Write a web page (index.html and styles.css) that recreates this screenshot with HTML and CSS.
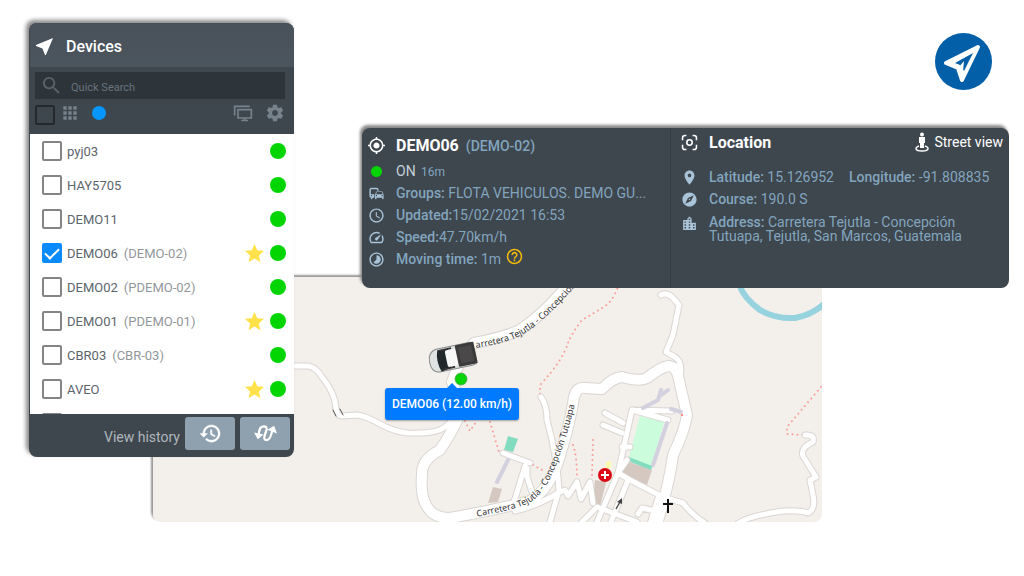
FILE: index.html
```html
<!DOCTYPE html>
<html lang="en">

<head>
	<meta charset="UTF-8">
	<meta name="viewport" content="width=device-width, initial-scale=1.0">
	<title>Devices</title>
	<link rel="stylesheet" href="styles.css">
</head>

<body>
	<svg class="sprite" aria-hidden="true">
		<symbol id="star" viewBox="0 0 24 24">
			<path d="M12 17.27L18.18 21l-1.64-7.03L22 9.24l-7.19-.61L12 2 9.19 8.63 2 9.24l5.46 4.73L5.82 21z" />
		</symbol>
	</svg>

	<main class="scene">
		<!-- map -->
		<section class="map">
			<svg class="map-canvas" viewBox="153 277 669 245" preserveAspectRatio="xMinYMin slice">
				<defs>
					<path id="label-north" d="M476 348 C500 344 518 340 536 325 C552 312 562 301 580 281" />
					<path id="label-south" d="M477 517 C500 511 518 510 532 501 C548 490 556 466 562 449 C569 430 573 410 580 386" />
					<g id="roads">
						<path d="M290 366 L308 366 Q316 367 322 377 Q335 393 336 408 Q337 416 342 416 L357 415 Q366 416 380 424 Q395 432 408 433 Q436 434 445 427 Q456 418 460 408" />
						<path d="M661 295 Q666 292 672 297 L679 305 L673 335 L666 352 L675 357 Q683 362 680 378" />
						<path d="M541 397 Q547 405 547 420 L552 440 Q558 470 559 490 L550 522" />
						<path d="M503 453 L530 463 M525 466 L514 502 M527 468 L527 477 L532 492" />
						<path d="M515 511 Q535 507 560 492 L565 490 L568 496 L577 482 L581 499 L590 482 L593 503" />
						<path d="M605 413 L623 423 M603 425 L622 433 M622 447 L630 447 M632 410 L672 411 M632 410 L668 420" />
						<path d="M632 410 L618 473 L597 522" />
						<path d="M627 460 L618 473 L630 480 L663 497 L683 503 Q692 515 706 524" />
						<path d="M628 480 L611 522 M580 524 L597 507 L637 522 M638 514 L642 508 L655 511 M658 498 L650 524" />
						<path d="M737 524 Q748 516 783 511 Q800 510 808 513 Q816 509 813 495 L810 480 L816 477 L803 456 Q800 448 813 442 Q815 434 805 435" />
					</g>
					<g id="main-road">
						<path d="M577 277 L560 294 Q542 315 520 330 Q505 337 474 343 Q462 353 452 382 L462 405 Q460 420 440 450 Q421 460 422 475 Q420 498 428 508 Q434 518 450 518 Q490 511 530 501 Q548 490 557 465 Q570 425 574 397 Q577 386 585 388 L602 389 Q612 378 622 377 Q640 382 647 378 Q661 367 668 366 Q676 366 678 376 L687 415 Q685 430 673 455 Q669 485 657 524" />
					</g>
				</defs>
				<rect class="land" x="153" y="277" width="669" height="245" />
				<path class="river" d="M740 286 Q743 297 760 310 Q775 319 795 318 Q812 315 824 304" />

				<path class="trail" d="M619 284 Q614 300 604 307 L582 320 Q572 333 568 343 Q563 360 540 385 L540 397" />
				<path class="trail" d="M821 387 L787 427 L787 434 L803 435" />
				<path class="trail" d="M573 445 Q577 455 577 478 M593 440 L592 475 M490 422 L499 452 M533 465 L542 470 M465 421 L470 431 L476 422" />

				<path class="building" d="M493 487L502 489L498 502L488 503z M595 480L606 482L600 507L593 502z M627 461L652 470L647 485L621 474z" />
				<path class="court" d="M508 436L518 439L513 452L504 450z M629 456L653 465L651 470L628 461z" />
				<path class="field" d="M640 416L664 422L652 466L629 457z" />
				<path class="yellow-patch" d="M606 462L611 461L611 468L605 469z" />

				<use class="casing" href="#roads" />
				<use class="casing wide" href="#main-road" />
				<use class="fill" href="#roads" />
				<use class="fill wide" href="#main-road" />

				<path class="walk" d="M508 460L497 482 M667 423L653 465 M643 408L658 400L661 390 M660 396L668 390 M671 409L681 412" />
				<path class="bridge" d="M333 410l3 6 M340 409l3 6" />
				<circle cx="682" cy="415" r="1" fill="#f66" />

				<text class="road-label"><textPath href="#label-north">arretera Tejutla - Concepción</textPath></text>
				<text class="road-label"><textPath href="#label-south">Carretera Tejutla - Concepción Tutuapa</textPath></text>

				<circle cx="605" cy="475" r="7" fill="#dc0a14" />
				<path d="M601 475h8M605 471v8" stroke="#fff" stroke-width="2" />
				<path d="M616 509l4-7" fill="none" stroke="#444" stroke-width="1.4" />
				<path d="M617 502l5-4v6z" fill="#444" />
				<path d="M668 499v14M663 504h10" stroke="#111" stroke-width="2" />

				<g transform="rotate(-12 453 357)">
					<rect x="429" y="346" width="47" height="23" rx="8" fill="#8b8d8c" opacity=".5" />
					<path d="M437 346h33q5 0 5 2v19q0 2-5 2h-33q-8-1-8-11t8-12z" fill="#dfe3e2" stroke="#8a8d8d" />
					<path d="M439 347l10 2v18l-10 2q-4-11 0-22z" fill="#20282b" />
					<path d="M439 347h14v2h-10zM439 368h14v-2h-10z" fill="#333" />
					<rect x="446" y="349" width="11" height="17" rx="2" fill="#f7f7f7" />
					<rect x="457" y="346" width="19" height="22" rx="1" fill="#3c3b3b" />
					<path d="M460 349h13v16h-13z" fill="#4a4848" />
				</g>
				<circle cx="461" cy="379" r="6" fill="#08d408" stroke="#4a9a4a" stroke-width=".7" />
			</svg>
			<div class="tooltip">DEMO06 (12.00 km/h)</div>
		</section>

		<!-- devices list -->
		<aside class="devices">
			<header class="devices-header">
				<svg class="icon" viewBox="2 2 20 20"><path d="M21 3L3 10.53v.98l6.84 2.65L12.48 21h.98L21 3z" /></svg>
				<h1>Devices</h1>
			</header>
			<div class="search">
				<svg class="icon" viewBox="0 0 24 24"><path d="M15.5 14h-.79l-.28-.27C15.41 12.59 16 11.11 16 9.5 16 5.91 13.09 3 9.5 3S3 5.91 3 9.5 5.91 16 9.5 16c1.61 0 3.09-.59 4.23-1.57l.27.28v.79l5 4.99L20.49 19l-4.99-5zm-6 0C7.01 14 5 11.99 5 9.5S7.01 5 9.5 5 14 7.01 14 9.5 11.99 14 9.5 14z" /></svg>
				<input type="text" placeholder="Quick Search" aria-label="Quick Search">
			</div>
			<div class="toolbar">
				<input class="check dark" type="checkbox" aria-label="Select all">
				<button class="tool" aria-label="Groups">
					<svg viewBox="0 0 24 24"><path d="M4 8h4V4H4v4zm6 12h4v-4h-4v4zm-6 0h4v-4H4v4zm0-6h4v-4H4v4zm6 0h4v-4h-4v4zm6-10v4h4V4h-4zm-6 4h4V4h-4v4zm6 6h4v-4h-4v4zm0 6h4v-4h-4v4z" /></svg>
				</button>
				<button class="tool" aria-label="Status"><span class="blue-dot"></span></button>
				<button class="tool push" aria-label="Screens">
					<svg viewBox="0 0 24 24"><path d="M2 15V4h18M6 8h16v10H6zM10 21h8M14 18v3" fill="none" stroke="currentColor" stroke-width="2" /></svg>
				</button>
				<button class="tool" aria-label="Settings">
					<svg viewBox="0 0 24 24"><path d="M19.43 12.98c.04-.32.07-.64.07-.98s-.03-.66-.07-.98l2.11-1.65c.19-.15.24-.42.12-.64l-2-3.46c-.12-.22-.39-.3-.61-.22l-2.49 1c-.52-.4-1.08-.73-1.69-.98l-.38-2.65C14.46 2.18 14.25 2 14 2h-4c-.25 0-.46.18-.49.42l-.38 2.65c-.61.25-1.17.59-1.69.98l-2.49-1c-.23-.09-.49 0-.61.22l-2 3.46c-.13.22-.07.49.12.64l2.11 1.65c-.04.32-.07.65-.07.98s.03.66.07.98l-2.11 1.65c-.19.15-.24.42-.12.64l2 3.46c.12.22.39.3.61.22l2.49-1c.52.4 1.08.73 1.69.98l.38 2.65c.03.24.24.42.49.42h4c.25 0 .46-.18.49-.42l.38-2.65c.61-.25 1.17-.59 1.69-.98l2.49 1c.23.09.49 0 .61-.22l2-3.46c.12-.22.07-.49-.12-.64l-2.11-1.65zM12 15.5c-1.93 0-3.5-1.57-3.5-3.5s1.57-3.5 3.5-3.5 3.5 1.57 3.5 3.5-1.57 3.5-3.5 3.5z" /></svg>
				</button>
			</div>
			<ul class="device-list">
				<li><label><input class="check" type="checkbox">pyj03</label><span class="dot"></span></li>
				<li><label><input class="check" type="checkbox">HAY5705</label><span class="dot"></span></li>
				<li><label><input class="check" type="checkbox">DEMO11</label><span class="dot"></span></li>
				<li><label><input class="check" type="checkbox" checked>DEMO06 <small>(DEMO-02)</small></label><svg class="star"><use href="#star" /></svg><span class="dot"></span></li>
				<li><label><input class="check" type="checkbox">DEMO02 <small>(PDEMO-02)</small></label><span class="dot"></span></li>
				<li><label><input class="check" type="checkbox">DEMO01 <small>(PDEMO-01)</small></label><svg class="star"><use href="#star" /></svg><span class="dot"></span></li>
				<li><label><input class="check" type="checkbox">CBR03 <small>(CBR-03)</small></label><span class="dot"></span></li>
				<li><label><input class="check" type="checkbox">AVEO</label><svg class="star"><use href="#star" /></svg><span class="dot"></span></li>
				<li><input class="check" type="checkbox" aria-label="Device"></li>
			</ul>
			<footer class="devices-footer">
				<span>View history</span>
				<button class="history-button" aria-label="History">
					<svg viewBox="0 0 24 24"><path d="M13 3c-4.97 0-9 4.03-9 9H1l3.89 3.89.07.14L9 12H6c0-3.87 3.13-7 7-7s7 3.13 7 7-3.13 7-7 7c-1.93 0-3.68-.79-4.94-2.06l-1.42 1.42C8.27 19.99 10.51 21 13 21c4.97 0 9-4.03 9-9s-4.03-9-9-9zm-1 5v5l4.28 2.54.72-1.21-3.5-2.08V8H12z" stroke="currentColor" stroke-width=".4" /></svg>
				</button>
				<button class="history-button" aria-label="Route">
					<svg viewBox="0 0 24 24"><path d="M5 14C5 8 7 4.500 10 4.500q4 0 3 4l-2 6q-1 4.500 2 4.500 4 0 6-10" fill="none" stroke="currentColor" stroke-width="2.400" /><path d="M0 11l4 7 6-5zM14 8l7-4 3 8z" /></svg>
				</button>
			</footer>
		</aside>

		<!-- selected device -->
		<section class="details">
			<div class="vehicle">
				<div class="row title">
					<svg class="icon" viewBox="1 1 22 22"><path d="M12 8c-2.21 0-4 1.79-4 4s1.79 4 4 4 4-1.79 4-4-1.79-4-4-4zm8.94 3c-.46-4.17-3.77-7.48-7.94-7.94V1h-2v2.06C6.83 3.52 3.52 6.83 3.06 11H1v2h2.06c.46 4.17 3.77 7.48 7.94 7.94V23h2v-2.06c4.17-.46 7.48-3.77 7.94-7.94H23v-2h-2.06zM12 19c-3.87 0-7-3.13-7-7s3.13-7 7-7 7 3.13 7 7-3.13 7-7 7z" /></svg>
					<h2>DEMO06 <small>(DEMO-02)</small></h2>
				</div>
				<div class="row">
					<span class="icon"><span class="on-dot"></span></span>
					<p class="state">ON <small>16m</small></p>
				</div>
				<div class="row">
					<svg class="icon" viewBox="0 0 24 24"><path d="M12 4H5C3.34 4 2 5.34 2 7v8c0 1.66 1.34 3 3 3l-1 1v1h1l2-2.03L9 18v-5H4V5.98L13 6v2h2V7c0-1.66-1.34-3-3-3zM5 14c.55 0 1 .45 1 1s-.45 1-1 1-1-.45-1-1 .45-1 1-1zm15.57-4.34c-.14-.4-.52-.66-.97-.66h-7.19c-.46 0-.83.26-.98.66L10 13.77l.01 5.51c0 .38.31.72.69.72h.62c.38 0 .68-.38.68-.76V18h8v1.24c0 .38.31.76.69.76h.61c.38 0 .69-.34.69-.72l.01-1.37v-4.14l-1.43-4.11zm-8.16.34h7.19l1.03 3h-9.25l1.03-3zM12 16c-.55 0-1-.45-1-1s.45-1 1-1 1 .45 1 1-.45 1-1 1zm8 0c-.55 0-1-.45-1-1s.45-1 1-1 1 .45 1 1-.45 1-1 1z" /></svg>
					<p><b>Groups:</b> FLOTA VEHICULOS. DEMO GU...</p>
				</div>
				<div class="row">
					<svg class="icon" viewBox="0 0 24 24"><path d="M11.99 2C6.47 2 2 6.48 2 12s4.47 10 9.99 10C17.52 22 22 17.52 22 12S17.52 2 11.99 2zM12 20c-4.42 0-8-3.58-8-8s3.58-8 8-8 8 3.58 8 8-3.58 8-8 8zm.5-13H11v6l5.25 3.15.75-1.23-4.5-2.67z" /></svg>
					<p><b>Updated:</b>15/02/2021 16:53</p>
				</div>
				<div class="row">
					<svg class="icon" viewBox="0 0 24 24"><path d="M20.38 8.57l-1.23 1.85a8 8 0 0 1-.22 7.58H5.07A8 8 0 0 1 15.58 6.85l1.85-1.23A10 10 0 0 0 3.35 19a2 2 0 0 0 1.72 1h13.85a2 2 0 0 0 1.74-1 10 10 0 0 0-.27-10.44zm-9.79 6.84a2 2 0 0 0 2.83 0l5.66-8.49-8.49 5.66a2 2 0 0 0 0 2.83z" /></svg>
					<p><b>Speed:</b>47.70km/h</p>
				</div>
				<div class="row">
					<svg class="icon" viewBox="0 0 24 24"><path d="M16.24 7.76C15.07 6.59 13.54 6 12 6v6l-4.24 4.24c2.34 2.34 6.14 2.34 8.49 0 2.34-2.34 2.34-6.14-.01-8.48zM12 2C6.48 2 2 6.48 2 12s4.48 10 10 10 10-4.48 10-10S17.52 2 12 2zm0 18c-4.42 0-8-3.58-8-8s3.58-8 8-8 8 3.58 8 8-3.58 8-8 8z" /></svg>
					<p><b>Moving time:</b> 1m</p>
					<svg class="help" viewBox="1 1 22 22"><path d="M11 18h2v-2h-2v2zm1-16C6.48 2 2 6.48 2 12s4.48 10 10 10 10-4.48 10-10S17.52 2 12 2zm0 18c-4.41 0-8-3.59-8-8s3.59-8 8-8 8 3.59 8 8-3.59 8-8 8zm0-14c-2.21 0-4 1.79-4 4h2c0-1.1.9-2 2-2s2 .9 2 2c0 2-3 1.75-3 5h2c0-2.25 3-2.5 3-5 0-2.21-1.79-4-4-4z" /></svg>
				</div>
			</div>
			<div class="location">
				<div class="row title">
					<svg class="icon" viewBox="1 1 22 22"><path d="M3 9V6q0-3 3-3h2M16 3h2q3 0 3 3v3M21 15v3q0 3-3 3h-2M8 21H6q-3 0-3-3v-3" fill="none" stroke="currentColor" stroke-width="2" /><circle cx="12" cy="12" r="3.5" fill="none" stroke="currentColor" stroke-width="2" /></svg>
					<h2>Location</h2>
					<a class="street-view" href="#">
						<svg viewBox="0 0 14 20"><circle cx="7" cy="2.5" r="2" /><path d="M4 5h6v6H9v5H5v-5H4z" /><path d="M4 14q-3 1-3 2.500 0 2.500 6 2.500t6-2.500q0-1.500-3-2.500" fill="none" stroke="currentColor" stroke-width="1.500" /></svg>
						Street view
					</a>
				</div>
				<div class="row">
					<svg class="icon" viewBox="0 0 24 24"><path d="M12 2C8.13 2 5 5.13 5 9c0 5.25 7 13 7 13s7-7.75 7-13c0-3.87-3.13-7-7-7zm0 9.5c-1.38 0-2.5-1.12-2.5-2.5s1.12-2.5 2.5-2.5 2.5 1.12 2.5 2.5-1.12 2.5-2.5 2.5z" /></svg>
					<p class="coords"><span><b>Latitude:</b> 15.126952</span><span><b>Longitude:</b> -91.808835</span></p>
				</div>
				<div class="row">
					<svg class="icon" viewBox="0 0 24 24"><path d="M12 10.9c-.61 0-1.1.49-1.1 1.1s.49 1.1 1.1 1.1c.61 0 1.1-.49 1.1-1.1s-.49-1.1-1.1-1.1zM12 2C6.48 2 2 6.48 2 12s4.48 10 10 10 10-4.48 10-10S17.52 2 12 2zm2.19 12.19L6 18l3.81-8.19L18 6l-3.81 8.19z" /></svg>
					<p><b>Course:</b> 190.0 S</p>
				</div>
				<div class="row top">
					<svg class="icon" viewBox="0 0 24 24"><path d="M15 11V5l-3-3-3 3v2H3v14h18V11h-6zm-8 8H5v-2h2v2zm0-4H5v-2h2v2zm0-4H5V9h2v2zm6 8h-2v-2h2v2zm0-4h-2v-2h2v2zm0-4h-2V9h2v2zm0-4h-2V5h2v2zm6 12h-2v-2h2v2zm0-4h-2v-2h2v2z" /></svg>
					<p class="address"><b>Address:</b> Carretera Tejutla - Concepción Tutuapa, Tejutla, San Marcos, Guatemala</p>
				</div>
			</div>
		</section>

		<svg class="logo" viewBox="0 0 57 57" role="img" aria-label="Logo">
			<circle cx="28.5" cy="28.5" r="28.5" fill="#0360a8" />
			<path d="M43 14L11 30l12 5 4 12z" fill="#fff" stroke="#fff" stroke-width="4" stroke-linejoin="round" />
			<path d="M38 20L20 30l5 2 4 6z" fill="#0360a8" />
			<path d="M23 35l6-7-1 10z" fill="#fff" />
		</svg>
	</main>
</body>

</html>
```
FILE: styles.css
```css
* {
	margin: 0;
	padding: 0;
	box-sizing: border-box;
}

body {
	font-family: Roboto, "Liberation Sans", sans-serif;
	background: white;
}

button {
	border: none;
	background: none;
	cursor: pointer;
}

svg {
	display: block;
	fill: currentColor;
}

.sprite {
	position: absolute;
	width: 0;
	height: 0;
}

/* the panels share grid cells where they overlap */
.scene {
	display: grid;
	grid-template-columns: 124px 141px 68px 1fr 187px;
	grid-template-rows: 105px 149px 11px auto 65px;
	padding: 23px 15px 23px 29px;
}

/* map */
.map {
	grid-area: 3 / 2 / 6 / 5;
	position: relative;
	min-height: 245px;
	border-radius: 8px;
	box-shadow: -2px -2px 2px #999;
}

.map-canvas {
	width: 100%;
	height: 245px;
	border-radius: 8px;
}

.land {
	fill: #f3efeb;
}

.river,
.trail,
.walk,
.bridge,
.casing,
.fill {
	fill: none;
	stroke-linecap: round;
	stroke-linejoin: round;
}

.river {
	stroke: #96d3df;
	stroke-width: 6px;
}

.trail {
	stroke: #fb9b96;
	stroke-width: 2px;
	stroke-dasharray: 0 5;
}

.building {
	fill: #d5c8c1;
}

.court {
	fill: #84dcc0;
}

.field {
	fill: #cbfcdc;
}

.yellow-patch {
	fill: #fdfbb0;
}

.casing {
	stroke: #dad6d3;
	stroke-width: 7px;
}

.casing.wide {
	stroke-width: 12px;
}

.fill {
	stroke: white;
	stroke-width: 5px;
}

.fill.wide {
	stroke-width: 10px;
}

.walk {
	stroke: #d3d1e0;
	stroke-width: 4px;
}

.bridge {
	stroke: #555;
}

.road-label {
	font-family: "Noto Sans", sans-serif;
	font-size: 9px;
	fill: #333;
}

.tooltip {
	position: absolute;
	left: 232px;
	top: 111px;
	padding: 0 7px;
	line-height: 32px;
	font-size: 12px;
	font-weight: 500;
	color: white;
	background: #007bff;
	border-radius: 3px;
	box-shadow: 0 1px 2px #0005;
	white-space: nowrap;
}

.tooltip::before {
	content: "";
	position: absolute;
	left: 50%;
	bottom: 100%;
	margin-left: -5px;
	border: 5px solid transparent;
	border-top: none;
	border-bottom-color: #007bff;
}

/* devices */
.devices {
	grid-area: 1 / 1 / 5 / 3;
	position: relative;
	overflow: hidden;
	align-self: start;
	color: white;
	background: #3e464e;
	border-left: 1px solid #3e464e;
	border-radius: 8px;
	box-shadow: -3px -3px 4px #888;
}

.devices-header {
	display: flex;
	align-items: center;
	gap: 12px;
	height: 44px;
	padding: 2px 5px 0;
	background: linear-gradient(#49515a, #4b555e);
}

.devices-header .icon {
	width: 19px;
	height: 19px;
}

.devices-header h1 {
	font-size: 16px;
	font-weight: 500;
}

.search {
	display: flex;
	align-items: center;
	gap: 8px;
	height: 27px;
	margin: 5px 9px 0 5px;
	padding-left: 5px;
	background: #2d343a;
	color: #59626a;
}

.search .icon {
	width: 23px;
	height: 23px;
}

.search input {
	flex: 1;
	min-width: 0;
	border: none;
	background: none;
	font: 11px Roboto, sans-serif;
	padding-top: 3px;
	color: white;
}

.search input::placeholder {
	color: #69737c;
}

.toolbar {
	display: flex;
	align-items: center;
	gap: 12px;
	height: 35px;
	padding: 0 9px 8px 5px;
}

.tool {
	color: #77838c;
}

.tool svg {
	width: 20px;
	height: 20px;
}

.tool.push {
	margin-left: auto;
}

.toolbar .dark {
	margin: 5px -7px 0 0;
}

.blue-dot,
.on-dot,
.dot {
	display: block;
	border-radius: 50%;
	background: #03d503;
}

.blue-dot {
	width: 14px;
	height: 14px;
	background: #0696ff;
}

.check {
	appearance: none;
	display: grid;
	place-items: center;
	width: 20px;
	height: 20px;
	border: 2px solid #858585;
	border-radius: 2px;
}

.check.dark {
	border-color: #23292f;
}

.check:checked {
	background: #0a8aff;
	border-color: #0a8aff;
}

.check:checked::after {
	content: "";
	width: 6px;
	height: 12px;
	margin-bottom: 3px;
	border: solid white;
	border-width: 0 2px 2px 0;
	transform: rotate(45deg);
}

.device-list {
	height: 280px;
	overflow: hidden;
	list-style: none;
	background: white;
}

.device-list li {
	display: flex;
	align-items: center;
	gap: 7px;
	height: 34px;
	padding: 0 8px 0 12px;
}

.device-list label {
	flex: 1;
	display: flex;
	align-items: center;
	gap: 5px;
	font-size: 13px;
	color: #5c656c;
}

.device-list small {
	margin-left: 1px;
	font-size: 13px;
	color: #92979b;
}

.star {
	width: 23px;
	height: 23px;
	margin-right: -3px;
	color: #ffe14a;
}

.dot {
	width: 16px;
	height: 16px;
}

.devices-footer {
	display: flex;
	justify-content: flex-end;
	gap: 5px;
	height: 43px;
	padding: 3px 4px 7px;
	line-height: 40px;
	font-size: 14px;
	color: #b1b7bc;
}

.history-button {
	display: grid;
	place-items: center;
	width: 50px;
	color: white;
	background: #8fa1ae;
	border-radius: 3px;
}

.history-button svg {
	width: 23px;
	height: 23px;
}

/* details card */
.details {
	grid-area: 2 / 4 / 4 / 6;
	position: relative;
	display: grid;
	grid-template-columns: 309px 1fr;
	color: #82a5be;
	background: #3e464e;
	border-radius: 8px;
	box-shadow: -2px -3px 3px #888;
}

.vehicle,
.location {
	padding: 6px 6px 0;
}

.vehicle {
	border-right: 1px solid #353c43;
}

.row {
	display: flex;
	align-items: center;
	gap: 11px;
	height: 22px;
	font-size: 14px;
	white-space: nowrap;
}

.row .icon {
	display: grid;
	place-items: center;
	flex: none;
	width: 17px;
	height: 17px;
	color: #a9c4d9;
}

.row b {
	font-weight: 500;
}

.row.title,
.title .icon {
	color: white;
}

.title h2 {
	font-size: 16px;
	font-weight: 700;
}

.title small {
	margin-left: 3px;
	font-size: 14px;
	font-weight: 500;
	color: #82a5be;
}

.vehicle .title {
	height: 24px;
	margin: -1px 0 3px;
}

.on-dot {
	width: 11px;
	height: 11px;
}

.state {
	color: #c3d0da;
}

.state small {
	margin-left: 2px;
	font-size: 12px;
	color: #82a5be;
}

.help {
	width: 17px;
	height: 17px;
	margin: 0 0 6px -6px;
	color: #f2bb0c;
}

.location {
	padding-left: 10px;
}

.location .title {
	margin-top: -3px;
	margin-bottom: 13px;
}

.street-view {
	display: flex;
	align-items: center;
	gap: 5px;
	margin-left: auto;
	color: white;
	text-decoration: none;
}

.street-view svg {
	width: 14px;
	height: 20px;
}

.coords {
	display: flex;
	gap: 15px;
}

.row.top {
	align-items: flex-start;
	height: auto;
	padding-top: 5px;
	white-space: normal;
}

.address {
	max-width: 260px;
	line-height: 14px;
}

.logo {
	grid-area: 1 / 5;
	justify-self: end;
	width: 57px;
	height: 57px;
	margin: 10px 17px 0 0;
}
```
